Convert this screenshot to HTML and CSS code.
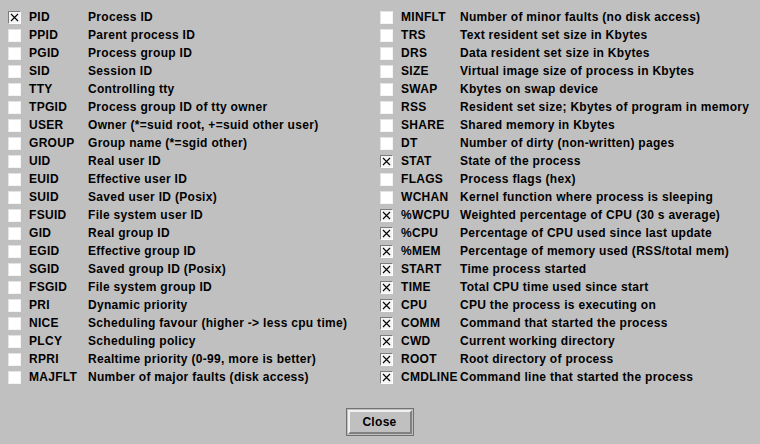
FILE: index.html
```html
<!DOCTYPE html>
<html>
<head>
<meta charset="utf-8">
<link rel="stylesheet" href="styles.css">
</head>
<body>
<div class="dialog">
  <div class="columns">
    <div class="col left">
      <div class="row"><span class="cb on"><svg viewBox="0 0 11 11"><path d="M2 2L9 9M9 2L2 9"/></svg></span><span class="name">PID</span><span class="desc">Process ID</span></div>
      <div class="row"><span class="cb"></span><span class="name">PPID</span><span class="desc">Parent process ID</span></div>
      <div class="row"><span class="cb"></span><span class="name">PGID</span><span class="desc">Process group ID</span></div>
      <div class="row"><span class="cb"></span><span class="name">SID</span><span class="desc">Session ID</span></div>
      <div class="row"><span class="cb"></span><span class="name">TTY</span><span class="desc">Controlling tty</span></div>
      <div class="row"><span class="cb"></span><span class="name">TPGID</span><span class="desc">Process group ID of tty owner</span></div>
      <div class="row"><span class="cb"></span><span class="name">USER</span><span class="desc">Owner (*=suid root, +=suid other user)</span></div>
      <div class="row"><span class="cb"></span><span class="name">GROUP</span><span class="desc">Group name (*=sgid other)</span></div>
      <div class="row"><span class="cb"></span><span class="name">UID</span><span class="desc">Real user ID</span></div>
      <div class="row"><span class="cb"></span><span class="name">EUID</span><span class="desc">Effective user ID</span></div>
      <div class="row"><span class="cb"></span><span class="name">SUID</span><span class="desc">Saved user ID (Posix)</span></div>
      <div class="row"><span class="cb"></span><span class="name">FSUID</span><span class="desc">File system user ID</span></div>
      <div class="row"><span class="cb"></span><span class="name">GID</span><span class="desc">Real group ID</span></div>
      <div class="row"><span class="cb"></span><span class="name">EGID</span><span class="desc">Effective group ID</span></div>
      <div class="row"><span class="cb"></span><span class="name">SGID</span><span class="desc">Saved group ID (Posix)</span></div>
      <div class="row"><span class="cb"></span><span class="name">FSGID</span><span class="desc">File system group ID</span></div>
      <div class="row"><span class="cb"></span><span class="name">PRI</span><span class="desc">Dynamic priority</span></div>
      <div class="row"><span class="cb"></span><span class="name">NICE</span><span class="desc">Scheduling favour (higher -&gt; less cpu time)</span></div>
      <div class="row"><span class="cb"></span><span class="name">PLCY</span><span class="desc">Scheduling policy</span></div>
      <div class="row"><span class="cb"></span><span class="name">RPRI</span><span class="desc">Realtime priority (0-99, more is better)</span></div>
      <div class="row"><span class="cb"></span><span class="name">MAJFLT</span><span class="desc">Number of major faults (disk access)</span></div>
    </div>
    <div class="col right">
      <div class="row"><span class="cb"></span><span class="name">MINFLT</span><span class="desc">Number of minor faults (no disk access)</span></div>
      <div class="row"><span class="cb"></span><span class="name">TRS</span><span class="desc">Text resident set size in Kbytes</span></div>
      <div class="row"><span class="cb"></span><span class="name">DRS</span><span class="desc">Data resident set size in Kbytes</span></div>
      <div class="row"><span class="cb"></span><span class="name">SIZE</span><span class="desc">Virtual image size of process in Kbytes</span></div>
      <div class="row"><span class="cb"></span><span class="name">SWAP</span><span class="desc">Kbytes on swap device</span></div>
      <div class="row"><span class="cb"></span><span class="name">RSS</span><span class="desc">Resident set size; Kbytes of program in memory</span></div>
      <div class="row"><span class="cb"></span><span class="name">SHARE</span><span class="desc">Shared memory in Kbytes</span></div>
      <div class="row"><span class="cb"></span><span class="name">DT</span><span class="desc">Number of dirty (non-written) pages</span></div>
      <div class="row"><span class="cb on"><svg viewBox="0 0 11 11"><path d="M2 2L9 9M9 2L2 9"/></svg></span><span class="name">STAT</span><span class="desc">State of the process</span></div>
      <div class="row"><span class="cb"></span><span class="name">FLAGS</span><span class="desc">Process flags (hex)</span></div>
      <div class="row"><span class="cb"></span><span class="name">WCHAN</span><span class="desc">Kernel function where process is sleeping</span></div>
      <div class="row"><span class="cb on"><svg viewBox="0 0 11 11"><path d="M2 2L9 9M9 2L2 9"/></svg></span><span class="name">%WCPU</span><span class="desc">Weighted percentage of CPU (30 s average)</span></div>
      <div class="row"><span class="cb on"><svg viewBox="0 0 11 11"><path d="M2 2L9 9M9 2L2 9"/></svg></span><span class="name">%CPU</span><span class="desc">Percentage of CPU used since last update</span></div>
      <div class="row"><span class="cb on"><svg viewBox="0 0 11 11"><path d="M2 2L9 9M9 2L2 9"/></svg></span><span class="name">%MEM</span><span class="desc">Percentage of memory used (RSS/total mem)</span></div>
      <div class="row"><span class="cb on"><svg viewBox="0 0 11 11"><path d="M2 2L9 9M9 2L2 9"/></svg></span><span class="name">START</span><span class="desc">Time process started</span></div>
      <div class="row"><span class="cb on"><svg viewBox="0 0 11 11"><path d="M2 2L9 9M9 2L2 9"/></svg></span><span class="name">TIME</span><span class="desc">Total CPU time used since start</span></div>
      <div class="row"><span class="cb on"><svg viewBox="0 0 11 11"><path d="M2 2L9 9M9 2L2 9"/></svg></span><span class="name">CPU</span><span class="desc">CPU the process is executing on</span></div>
      <div class="row"><span class="cb on"><svg viewBox="0 0 11 11"><path d="M2 2L9 9M9 2L2 9"/></svg></span><span class="name">COMM</span><span class="desc">Command that started the process</span></div>
      <div class="row"><span class="cb on"><svg viewBox="0 0 11 11"><path d="M2 2L9 9M9 2L2 9"/></svg></span><span class="name">CWD</span><span class="desc">Current working directory</span></div>
      <div class="row"><span class="cb on"><svg viewBox="0 0 11 11"><path d="M2 2L9 9M9 2L2 9"/></svg></span><span class="name">ROOT</span><span class="desc">Root directory of process</span></div>
      <div class="row"><span class="cb on"><svg viewBox="0 0 11 11"><path d="M2 2L9 9M9 2L2 9"/></svg></span><span class="name">CMDLINE</span><span class="desc">Command line that started the process</span></div>
    </div>
  </div>
  <div class="buttons">
    <div class="default-frame"><button class="btn">Close</button></div>
  </div>
</div>
</body>
</html>
```
FILE: styles.css
```css
html, body {
  margin: 0;
  padding: 0;
  background: #c0c0c0;
}
body {
  width: 760px;
  height: 444px;
  overflow: hidden;
  font-family: "Liberation Sans", Arial, sans-serif;
  font-weight: bold;
  font-size: 12px;
  letter-spacing: 0.3px;
  color: #000;
}
.dialog {
  padding: 8px 0 0 0;
}
.columns {
  display: flex;
}
.col {
  display: flex;
  flex-direction: column;
}
.left {
  width: 372px;
  padding-left: 8px;
}
.row {
  display: flex;
  align-items: center;
  height: 18px;
}
.cb {
  box-sizing: border-box;
  width: 13px;
  height: 13px;
  background: #fff;
  border-top: 1px solid #e4e4e4;
  border-left: 1px solid #e4e4e4;
  border-right: 1px solid #f4f4f4;
  border-bottom: 1px solid #f4f4f4;
  display: flex;
  flex: none;
}
.cb.on {
  background: #f4f4f4;
  border-top-color: #7c7c7c;
  border-left-color: #7c7c7c;
  border-right-color: #fff;
  border-bottom-color: #fff;
}
.cb svg {
  width: 11px;
  height: 11px;
}
.cb svg path {
  stroke: #000;
  stroke-width: 1.1;
  fill: none;
}
.name {
  margin-left: 8px;
  width: 59px;
  white-space: nowrap;
}
.desc {
  white-space: nowrap;
}
.buttons {
  display: flex;
  justify-content: center;
  padding-top: 22px;
}
.default-frame {
  border: 1px solid #707070;
  padding: 1px;
  margin-left: -1px;
}
.btn {
  display: block;
  width: 64px;
  height: 24px;
  background: #c0c0c0;
  font: bold 12px "Liberation Sans", Arial, sans-serif;
  letter-spacing: 0.3px;
  color: #000;
  border-top: 2px solid #f0f0f0;
  border-left: 2px solid #f0f0f0;
  border-right: 2px solid #808080;
  border-bottom: 2px solid #808080;
  padding: 0;
}
```
